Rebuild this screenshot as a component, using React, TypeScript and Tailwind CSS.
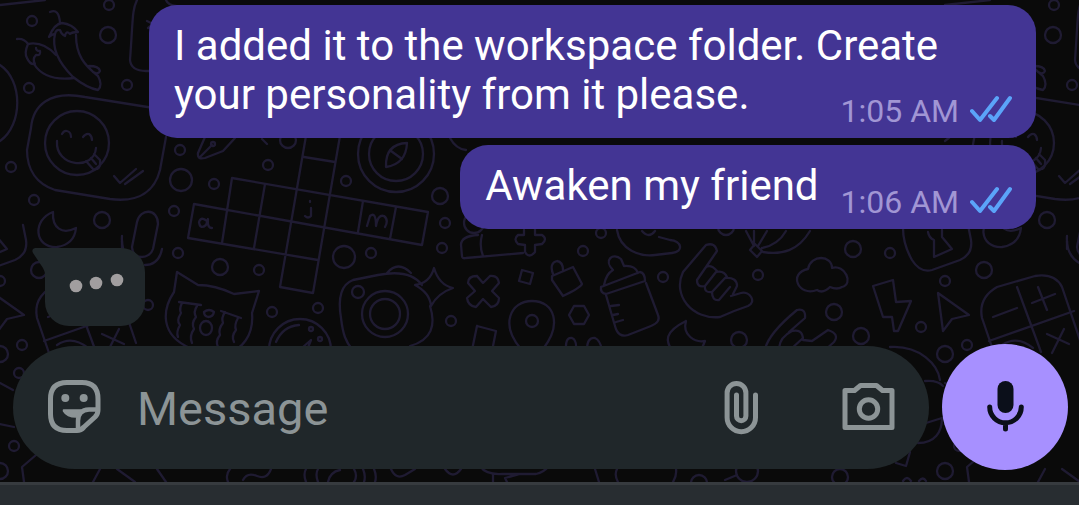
import { FC } from "react";

type MessageProps = {
    text: string,
    time: string,
}

const messages: MessageProps[] = [
    { text: "I added it to the workspace folder. Create your personality from it please.", time: "1:05 AM" },
    { text: "Awaken my friend", time: "1:06 AM" },
];

// [cx, cy, r]
const bubbles = [
    [109, 5, 5], [32, 21, 5], [108, 35, 8], [29, 88, 5], [127, 85, 5], [11, 167, 5], [34, 200, 5], [102, 220, 8],
    [180, 150, 5], [181, 180, 11], [174, 211, 5], [178, 253, 5], [220, 267, 8], [259, 270, 5], [214, 184, 5],
    [268, 165, 5], [288, 140, 8], [346, 181, 5], [440, 196, 8], [445, 223, 5], [442, 248, 5], [344, 257, 11],
    [371, 253, 5], [272, 312, 5], [318, 308, 5], [358, 292, 6], [451, 321, 5], [39, 270, 8], [0, 281, 5],
    [148, 305, 5], [22, 345, 5], [0, 354, 8], [19, 373, 5], [14, 446, 5], [0, 471, 8], [474, 223, 10],
    [601, 233, 5], [583, 251, 5], [663, 277, 5], [739, 340, 8], [726, 227, 8], [758, 275, 5], [853, 249, 8],
    [890, 253, 5], [834, 312, 8], [861, 336, 8], [921, 327, 5], [840, 477, 8], [747, 471, 11], [699, 483, 8],
];

const Doodles: FC = () => {
    return (
        <svg aria-hidden="true" className="absolute inset-0 h-full w-full" fill="none" stroke="#1f1b32" strokeWidth="2.3" strokeLinecap="round" strokeLinejoin="round">
            <g id="doodles">
                {bubbles.map(([cx, cy, r]) => (
                    <circle key={`${cx}-${cy}`} cx={cx} cy={cy} r={r} />
                ))}
                <path d="M0 5 L45 0 M0 65 C23 80 23 125 0 141" />
                <path d="M137 0 C132 10 133 20 130 60 Q131 71 146 71 H160 M147 21 l6 3 -5 4 M166 0 Q168 5 176 6" />
                {/* chili peppers */}
                <path d="M50 12 Q59 8 60 23 M49 37 Q54 24 62 23 Q72 24 78 32 Q72 32 70 34 Q66 30 65 36 Q61 34 60 30 Q56 29 55 34 Q52 34 49 37 M55 34 Q50 54 73 77 Q87 88 98 90 Q103 85 98 76 C84 65 76 55 76 35 M89 66 Q99 66 100 71 Q98 75 93 72" />
                <path d="M17 39 Q24 38 28 44 Q43 41 56 55 M28 44 Q24 53 27 58 Q30 65 35 64 Q32 59 36 55 Q41 56 40 51 Q36 51 36 48 M34 64 C42 77 57 80 74 78" />
                {/* message with smiling face */}
                <path d="M160 109 L85 97 C50 90 33 105 31 128 L27 150 C27 170 37 184 55 190 L110 199 C140 203 155 190 160 170 L166 137" />
                <circle cx="77" cy="143" r="32" />
                <path d="M62 134 Q64 130 67 131 Q71 132 71 137 M83 137 Q86 133 89 134 Q92 136 92 140 M57 141 C55 167 94 171 96 148 M86 161 L93 169 Q101 171 100 160 L94 154 M91 158 l5 6 M114 176 l6 7 16 -14 M125 184 l18 -13" />
                <path d="M53 212 C32 220 34 248 57 247 C70 245 75 238 76 228 C62 235 52 228 53 212 Z" />
                <path d="M132 247 L137 222 C140 208 158 208 158 224 L153 249 C150 259 133 261 132 247 M162 249 C160 259 155 265 145 265 M122 241 v8" />
                {/* fountain pen and compass */}
                <path d="M205 137 L198 153 Q197 160 205 158 L223 151 L235 138 M200 157 L212 145 M262 139 l5 5" />
                <circle cx="213" cy="144" r="2" />
                <circle cx="396" cy="154" r="38" />
                <circle cx="396" cy="154" r="27" />
                <path d="M407 143 Q385 144 386 167 Q406 164 407 143 M391 151 l11 8" />
                <path d="M450 138 Q456 149 466 150" />
                {/* crossword */}
                <path d="M232 178 L428 212 L422 245 L194 204 L188 238 L318 260 M232 178 L222 243 M265 184 L254 248 M307 130 L280 287 L313 293 L341 130 M304 157 L335 162 M363 201 L358 232 M396 207 L390 239" />
                <path d="M207 221 q-6 -5 -8 1 q1 8 7 3 l2 -6 q-1 9 4 9 M311 208 v8 q-3 3 -6 0 M310 201 v1 M367 226 l3 -10 q6 -5 6 10 q2 -12 8 -10 q5 4 1 11" />
                {/* crying cat */}
                <path d="M177 272 L198 285 Q215 285 234 294 L259 291 L252 313 C254 335 242 350 226 354 M177 272 L174 292 C162 310 160 335 190 348" />
                <path d="M179 302 l22 3 M182 303 q-3 6 -1 10 q-5 8 -1 12 q-4 7 -2 12 M197 306 q-4 6 -1 11 q-5 6 -2 12 q-5 7 -2 14 M221 311 l20 7 M225 312 q-4 6 -2 11 q-5 6 -3 12 q-5 6 -2 12 M238 318 q-4 7 -2 12 q-5 6 -2 12" />
                <path d="M204 312 q5 -4 10 0 q-1 5 -6 5 q-4 -1 -4 -5" />
                <ellipse cx="206" cy="328" rx="6" ry="7" />
                <circle cx="300" cy="350" r="31" />
                <path d="M276 342 Q283 326 299 325 M303 347 l8 -7 -4 10" />
                <circle cx="311" cy="329" r="2" />
                <circle cx="320" cy="339" r="2" />
                {/* camera and star */}
                <path d="M422 285 C413 273 398 271 378 275 L353 280 C340 285 338 300 341 318 C343 335 346 342 352 349 M430 306 C436 325 432 340 410 346 M387 273 Q398 260 411 273" />
                <circle cx="385" cy="314" r="23" />
                <circle cx="385" cy="314" r="15" />
                <path d="M434 268 Q439 285 453 288 Q438 293 431 306 Q430 293 415 285 Q430 283 434 268 Z" />
                <path d="M478 235 Q461 236 461 245 L462 256 Q462 259 466 258 L523 253 M482 235 Q479 246 483 256 M524 230 v5 h-6 q-5 4 0 9 l7 1 v7 q4 7 10 0 v-7 l7 -1 q6 -5 0 -9 h-7 v-6" />
                <path d="M477 276 l6 7 7 -7 q8 -1 9 7 l-7 8 7 7 q0 8 -8 9 l-8 -8 -7 8 q-8 -1 -9 -9 l8 -7 -7 -8 q0 -7 9 -7" />
                <path d="M522 270 l11 3 -3 11 -11 -3 Z M477 326 l19 5 -4 20 M477 326 l-5 24" />
                <path d="M552 276 L573 267 L582 284 Q580 288 563 296 L552 280 Z M553 274 q-4 -11 4 -13 q6 1 6 9 M574 306 h10 l5 9 -5 9 h-10 l-5 -9 Z" />
                <path d="M521 349 C500 325 510 301 532 301 C555 301 562 325 543 349 M566 350 q-1 -13 6 -12 q5 2 4 12 M587 350 q0 -13 8 -12 q5 2 7 12" />
                <circle cx="532" cy="321" r="6" />
                {/* baby bottle */}
                <path d="M601 287 L640 272 Q645 273 645 281 L606 294 Q600 293 601 287 M604 285 Q606 274 613 270 C603 260 613 252 621 259 L624 266 Q635 265 638 273 M606 295 L615 326 Q618 338 628 335 L651 326 Q661 322 658 315 L646 283 M611 306 l8 -1 M613 315 l5 -1 M616 322 l7 -2" />
                {/* hands */}
                <path d="M617 230 C620 250 640 257 655 255 L672 253 C684 252 682 241 670 240 L659 237 M642 231 q7 8 13 0" />
                <path d="M706 245 L683 272 C672 295 692 320 720 317 Q733 311 748 306 C757 302 750 291 741 293 L731 296 M706 245 Q715 242 717 251 L706 267 M706 267 Q711 264 717 271 M697 280 L706 267 M697 280 Q697 288 705 286 L716 272 Q724 270 727 277 M705 286 Q704 293 712 292 L725 278 Q737 277 737 286 L733 294 M712 292 Q712 301 719 300 L730 287" />
                <path d="M686 321 C664 332 665 341 673 352 M686 321 C682 335 695 343 705 341 Q703 346 701 350" />
                <path d="M765 349 Q769 333 797 310 Q806 308 805 318 L789 332 Q803 327 803 340 L812 341 L828 330 Q840 334 834 342 L825 350 M779 348 Q780 337 792 331 M791 349 L803 338" />
                <path d="M746 231 L754 246 M754 231 V246 M767 231 L758 246 M786 231 Q778 245 762 248 M810 231 C798 251 782 255 763 252 M750 250 l5 -6 7 7 -5 6 Z" />
                <path d="M808 269 C811 254 832 255 832 268 C845 264 854 284 842 287 Q837 290 830 287 Q823 294 817 290 C798 297 788 273 808 269 Z" />
                <path d="M873 286 L893 280 L896 302 L911 301 L898 331 L894 331 L892 317 L883 317 Z M938 293 L969 315 L952 319 L943 331 Z" />
                <path d="M903 228 C903 240 908 253 912 260 Q920 273 932 270 L960 260 Q973 254 971 240 L968 225 M928 232 q1 6 6 8 l0 17 18 -8 -10 -12 v-7" />
                {/* calculator */}
                <path d="M994 353 L982 318 Q978 298 997 287 L1035 276 Q1055 273 1062 287 L1081 343 M1017 287 L1041 352 M989 341 L1074 311 M993 317 l24 -9 M1032 303 l23 -9 M1038 287 l9 23 M1047 334 l22 10 M1064 329 l-12 24" />
                <path d="M1002 345 q15 -10 31 3 M1067 236 C1066 250 1072 260 1083 265" />
                <path d="M890 347 C920 345 938 365 940 380 M925 381 q13 -1 18 5 M918 443 C935 443 942 432 942 418 l-16 5 M910 452 l-4 14 -10 -3" />
                <path d="M0 383 L13 390 M0 424 l14 3 M36 455 L22 467 L24 482 M100 469 L93 482 M117 469 l18 13 M157 469 l9 13 M230 469 q-5 6 -2 13 M243 480 q4 -8 14 -4 t14 -7 M306 469 q-3 5 0 13 M318 469 q-3 5 0 13 M328 482 q2 -10 12 -12" />
                <path d="M354 469 q4 7 0 13 M363 469 q3 7 1 13 M374 469 q3 7 1 13 M391 469 q5 11 14 6 l10 -6 M445 469 q8 11 16 0 M480 466 q6 9 22 8 h34 q8 -2 12 -7 M493 474 v8 M520 474 l-15 4 3 6 M595 469 l4 13 M617 469 q-3 6 1 13 M676 469 q1 6 -3 13 M725 480 l12 -5 M903 481 q4 -6 8 0 M919 481 q4 -5 7 0" />
            </g>
            <use href="#doodles" x="-945" />
            <use href="#doodles" x="945" />
        </svg>
    )
}

const OutgoingMessage: FC<MessageProps> = ({ text, time }) => {
    return (
        <article className="flow-root max-w-[887px] rounded-[28px] bg-[#433594] pl-[25px] pr-6 pt-4 pb-2 text-[42px] leading-[49px] text-white">
            {text}
            {/* floats at the end of the last line */}
            <span className="float-right ml-[22px] mt-[22px] flex items-center gap-[11px] text-[32px] leading-[38px] text-[#a196d4]">
                <time>{time}</time>
                <svg role="img" aria-label="Read" className="mb-1" width="42" height="28" viewBox="0 0 42 28" fill="none" stroke="#5ba4f9" strokeWidth="4" strokeLinecap="round" strokeLinejoin="round">
                    <path d="M2 16 L10 25 L27 3" />
                    <path d="M20 21 L24 25 L40 3" />
                </svg>
            </span>
        </article>
    )
}

const TypingIndicator: FC = () => {
    return (
        <div role="status" aria-label="Typing" className="flex pl-8 pt-[19px]">
            <svg width="13" height="28" viewBox="0 0 13 28" fill="#20272a">
                <path d="M13 0 H3 Q-1 1 1 5 L11 20 Q13 23 13 28 Z" />
            </svg>
            <div className="flex h-[78px] w-[100px] justify-center rounded-[24px] rounded-tl-none bg-[#20272a]">
                <svg width="58" height="78" viewBox="0 0 58 78" fill="#a19e9f">
                    <circle cx="10" cy="38" r="6.3" />
                    <circle cx="30" cy="35" r="6.3" />
                    <circle cx="51" cy="32" r="6.3" />
                </svg>
            </div>
        </div>
    )
}

const Composer: FC = () => {
    return (
        <form className="flex items-center gap-[13px] pl-[13px] pr-[11px] pt-[18px] pb-3" onSubmit={(e) => e.preventDefault()}>
            <div className="flex h-[123px] min-w-0 flex-1 items-center rounded-full bg-[#20272a] pl-[34px] pr-8 text-[#8c9496]">
                <button type="button" aria-label="Stickers" className="shrink-0">
                    <svg width="56" height="56" viewBox="0 0 56 56" fill="none" stroke="currentColor" strokeWidth="5" strokeLinejoin="round">
                        <path d="M51 31 V20 Q51 3.5 35 3.5 H20 Q3.5 3.5 3.5 20 V35 Q3.5 51.5 20 51.5 H30 Q34 51.5 37 48 L48 38 Q51 35 51 31 Z" />
                        <path d="M51 30.5 H42 Q31 31 31 42 V51" strokeWidth="4.5" />
                        <path d="M16.5 31 H34 L29 38 Q20 38 16.5 32 Z" fill="currentColor" strokeWidth="1.5" />
                        <circle cx="18.3" cy="19" r="4" fill="currentColor" stroke="none" />
                        <circle cx="36.7" cy="19" r="4" fill="currentColor" stroke="none" />
                    </svg>
                </button>
                <input type="text" aria-label="Message" placeholder="Message" className="ml-[34px] h-16 min-w-0 flex-1 bg-transparent pt-1 text-[47px] text-white outline-none placeholder:text-[#8c9496]" />
                <button type="button" aria-label="Attach file" className="shrink-0">
                    <svg width="38" height="56" viewBox="0 0 38 56" fill="none" stroke="currentColor" strokeWidth="5" strokeLinecap="round">
                        <path d="M33.5 16 V38.5 a14.2 14.2 0 0 1 -28.4 0 V14 a9.4 9.4 0 0 1 18.8 0 V37 a4.7 4.7 0 0 1 -9.4 0 V16" />
                    </svg>
                </button>
                <button type="button" aria-label="Camera" className="ml-20 shrink-0">
                    <svg width="57" height="52" viewBox="0 0 57 52" fill="none" stroke="currentColor" strokeWidth="5" strokeLinejoin="round">
                        <path d="M5 9.5 H14.5 L20.5 4.5 H36.5 L42.5 9.5 H52 V46.5 H5 Z" />
                        <circle cx="28.5" cy="28" r="9.2" />
                    </svg>
                </button>
            </div>
            <button type="button" aria-label="Record voice message" className="flex size-[126px] shrink-0 items-center justify-center rounded-full bg-[#a790ff] text-[#0b0f1a]">
                <svg width="41" height="56" viewBox="0 0 41 56" fill="none" stroke="currentColor" strokeWidth="5" strokeLinecap="round">
                    <rect x="12.5" y="2" width="16" height="32" rx="8" fill="currentColor" stroke="none" />
                    <path d="M4.7 28 a15.8 15.8 0 0 0 31.600 0 M20.500 44 V50" />
                </svg>
            </button>
        </form>
    )
}

const App: FC = () => {
    return (
        <div className="flex min-h-screen flex-col bg-[#282d31] font-[Roboto,sans-serif]">
            <main className="relative overflow-hidden bg-[#0a0a0a]">
                <Doodles />
                <div className="relative">
                    <section className="flex flex-col items-end gap-[7px] pr-[43px] pt-[5px]">
                        {messages.map((message) => (
                            <OutgoingMessage key={message.time} {...message} />
                        ))}
                    </section>
                    <TypingIndicator />
                    <Composer />
                </div>
            </main>
            <footer className="flex-1 border-t-[3px] border-[#373b3f]" />
        </div>
    )
}

export default App;
